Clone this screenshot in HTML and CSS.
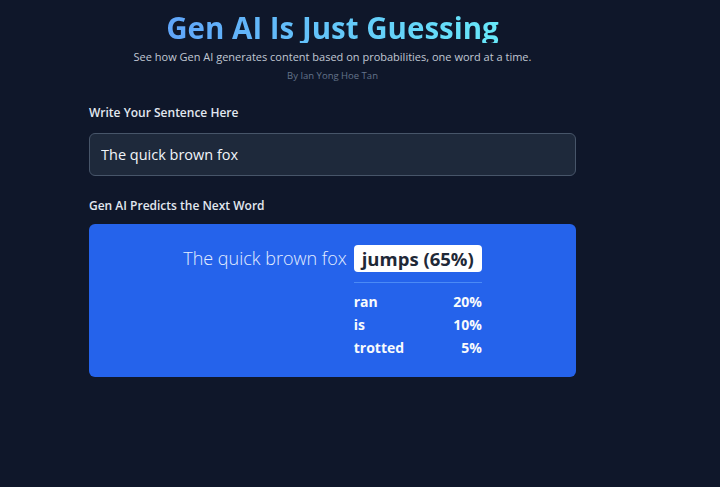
FILE: index.html
```html
<!DOCTYPE html>
<html lang="en">
<head>
    <meta charset="UTF-8">
    <meta name="viewport" content="width=device-width, initial-scale=1.0">
    <title>Gen AI Is Just Guessing</title>
    <link rel="stylesheet" href="styles.css">
</head>
<body>
    <div class="page">
        <div class="header">
            <h1 class="title">Gen AI Is Just Guessing</h1>
            <p class="subtitle">See how Gen AI generates content based on probabilities, one word at a time.</p>
            <p class="author">By Ian Yong Hoe Tan</p>
        </div>

        <label class="label" for="sentence">Write Your Sentence Here</label>
        <input class="sentence-input" type="text" id="sentence" value="The quick brown fox">

        <div class="label label-second">Gen AI Predicts the Next Word</div>
        <div class="prediction">
            <span class="prompt">The quick brown fox</span>
            <div class="guess">
                <span class="badge">jumps (65%)</span>
                <div class="divider"></div>
                <div class="alt"><span>ran</span><span>20%</span></div>
                <div class="alt"><span>is</span><span>10%</span></div>
                <div class="alt"><span>trotted</span><span>5%</span></div>
            </div>
        </div>
    </div>
</body>
</html>
```

FILE: styles.css
```css
body {
    margin: 0;
    padding: 0;
    background-color: #0f172a;
    font-family: "Open Sans", "Noto Sans", Arial, sans-serif;
    color: #e2e8f0;
}
.page {
    width: 487px;
    margin-left: 89px;
    padding-top: 13px;
}
.header {
    text-align: center;
}
.title {
    margin: 0;
    font-size: 29.5px;
    line-height: 30px;
    font-weight: 700;
    background: linear-gradient(90deg, #60a5fa, #67e8f9);
    -webkit-background-clip: text;
    background-clip: text;
    color: transparent;
    display: inline-block;
}
.subtitle {
    margin: 5px 0 0;
    font-size: 11px;
    line-height: 16px;
    color: #c0c8d4;
}
.author {
    margin: 4px 0 0;
    font-size: 9.5px;
    line-height: 14px;
    color: #64748b;
}
.label {
    display: block;
    margin-top: 21px;
    font-size: 12px;
    line-height: 18px;
    font-weight: 600;
    color: #e2e8f0;
}
.sentence-input {
    display: block;
    box-sizing: border-box;
    width: 100%;
    height: 43px;
    margin-top: 11px;
    padding: 0 11px;
    background: #1e293b;
    border: 1px solid #475569;
    border-radius: 6px;
    color: #f1f5f9;
    font-family: inherit;
    font-size: 14.5px;
}
.label-second {
    margin-top: 21px;
}
.prediction {
    display: flex;
    justify-content: center;
    align-items: flex-start;
    gap: 7px;
    margin-top: 9px;
    padding: 21px 20px 18px;
    background: #2563eb;
    border-radius: 6px;
}
.prompt {
    font-size: 18px;
    line-height: 27px;
    font-weight: 300;
    color: #e3edff;
}
.guess {
    display: flex;
    flex-direction: column;
}
.badge {
    height: 27px;
    line-height: 27px;
    padding: 0 8px;
    background: white;
    border-radius: 4px;
    color: #1f2937;
    font-size: 18.5px;
    font-weight: 700;
    white-space: nowrap;
}
.divider {
    margin-top: 10px;
    border-top: 1px solid #4b8af5;
}
.alt {
    display: flex;
    justify-content: space-between;
    font-size: 14px;
    line-height: 23px;
    font-weight: 700;
    color: #f8fafc;
}
.divider + .alt {
    margin-top: 7px;
}
```
